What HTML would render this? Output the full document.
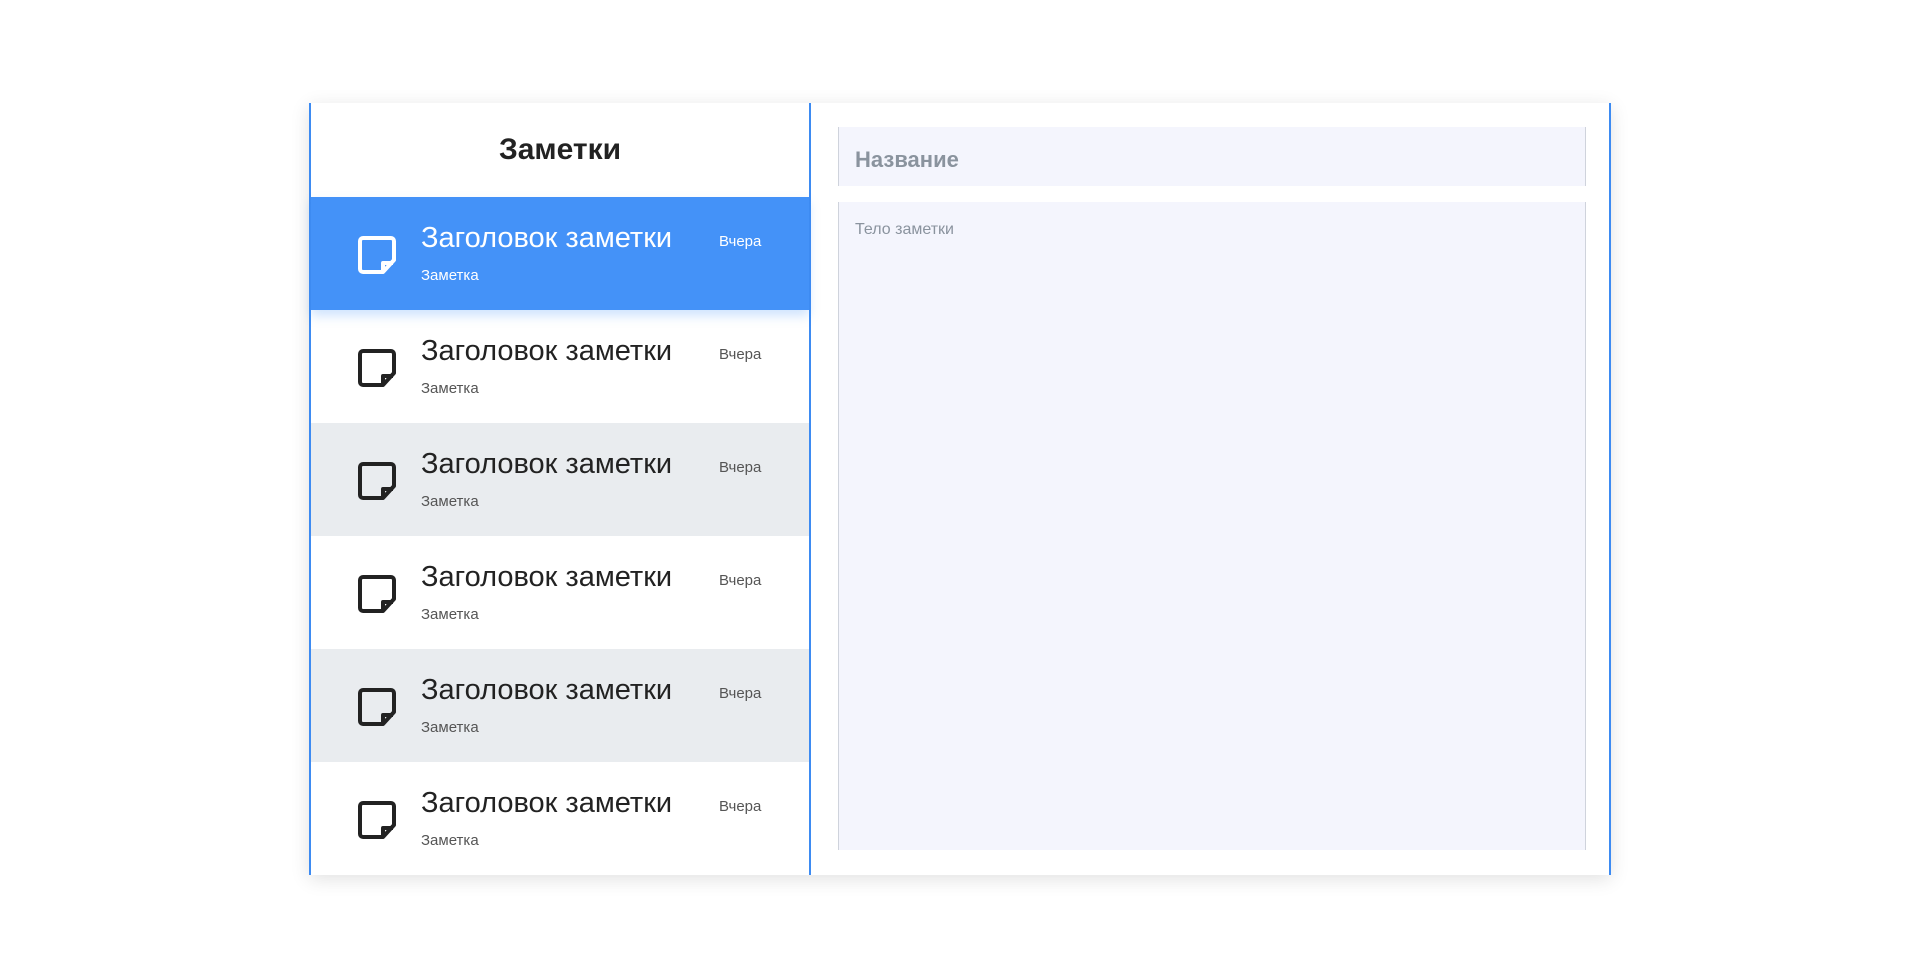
<!DOCTYPE html>
<html><head><meta charset="utf-8"><style>
*{box-sizing:border-box;margin:0;padding:0}
body{width:1920px;height:978px;background:#fff;font-family:"Liberation Sans","DejaVu Sans",sans-serif;position:relative;overflow:hidden}
.card{position:absolute;left:309px;top:103px;width:1302px;height:772px;background:#fff;box-shadow:0 4px 18px rgba(0,0,0,.12);border-left:2px solid #3d8bf2;border-right:2px solid #3d8bf2}
.left{position:absolute;left:0;top:0;width:500px;height:772px;border-right:2px solid #3d8bf2}
.hdr{height:94px;text-align:center;font-size:30px;color:#222;line-height:94px;font-weight:bold}
.row{height:113px;position:relative;color:#222}
.row.gray{background:#e9ecef}
.row.act{background:#4492f8;color:#fff;box-shadow:0 6px 10px rgba(68,146,248,.25);z-index:2}
.row svg{position:absolute;left:46px;top:38px}
.t{position:absolute;left:110px;top:25px;font-size:29px}
.s{position:absolute;left:110px;top:70px;font-size:15px;color:#555}
.d{position:absolute;left:408px;top:36px;font-size:15px;color:#555}
.act .s,.act .d{color:#fff}
.inp{position:absolute;left:527px;top:24px;width:748px;height:59px;background:#f4f5fd;border-left:1px solid #cfd3dc;border-right:1px solid #cfd3dc;font-size:22px;font-weight:bold;color:#8a939e;padding:20px 0 0 16px}
.ta{position:absolute;left:527px;top:99px;width:748px;height:648px;background:#f4f5fd;border-left:1px solid #cfd3dc;border-right:1px solid #cfd3dc;font-size:16px;color:#8a939e;padding:19px 0 0 16px}
</style></head><body>
<div class="card">
<div class="left">
<div class="hdr">Заметки</div>
<div class="row act"><svg width="40" height="40" viewBox="0 0 40 40"><path d="M6 3h28a3 3 0 0 1 3 3v19l-11 12H6a3 3 0 0 1-3-3V6a3 3 0 0 1 3-3z M26 37V28h10" fill="none" stroke="#fff" stroke-width="4" stroke-linejoin="round"/></svg><div class="t">Заголовок заметки</div><div class="s">Заметка</div><div class="d">Вчера</div></div>
<div class="row"><svg width="40" height="40" viewBox="0 0 40 40"><path d="M6 3h28a3 3 0 0 1 3 3v19l-11 12H6a3 3 0 0 1-3-3V6a3 3 0 0 1 3-3z M26 37V28h10" fill="none" stroke="#222" stroke-width="4" stroke-linejoin="round"/></svg><div class="t">Заголовок заметки</div><div class="s">Заметка</div><div class="d">Вчера</div></div>
<div class="row gray"><svg width="40" height="40" viewBox="0 0 40 40"><path d="M6 3h28a3 3 0 0 1 3 3v19l-11 12H6a3 3 0 0 1-3-3V6a3 3 0 0 1 3-3z M26 37V28h10" fill="none" stroke="#222" stroke-width="4" stroke-linejoin="round"/></svg><div class="t">Заголовок заметки</div><div class="s">Заметка</div><div class="d">Вчера</div></div>
<div class="row"><svg width="40" height="40" viewBox="0 0 40 40"><path d="M6 3h28a3 3 0 0 1 3 3v19l-11 12H6a3 3 0 0 1-3-3V6a3 3 0 0 1 3-3z M26 37V28h10" fill="none" stroke="#222" stroke-width="4" stroke-linejoin="round"/></svg><div class="t">Заголовок заметки</div><div class="s">Заметка</div><div class="d">Вчера</div></div>
<div class="row gray"><svg width="40" height="40" viewBox="0 0 40 40"><path d="M6 3h28a3 3 0 0 1 3 3v19l-11 12H6a3 3 0 0 1-3-3V6a3 3 0 0 1 3-3z M26 37V28h10" fill="none" stroke="#222" stroke-width="4" stroke-linejoin="round"/></svg><div class="t">Заголовок заметки</div><div class="s">Заметка</div><div class="d">Вчера</div></div>
<div class="row"><svg width="40" height="40" viewBox="0 0 40 40"><path d="M6 3h28a3 3 0 0 1 3 3v19l-11 12H6a3 3 0 0 1-3-3V6a3 3 0 0 1 3-3z M26 37V28h10" fill="none" stroke="#222" stroke-width="4" stroke-linejoin="round"/></svg><div class="t">Заголовок заметки</div><div class="s">Заметка</div><div class="d">Вчера</div></div>
</div>
<div class="inp">Название</div>
<div class="ta">Тело заметки</div>
</div>
</body></html>
